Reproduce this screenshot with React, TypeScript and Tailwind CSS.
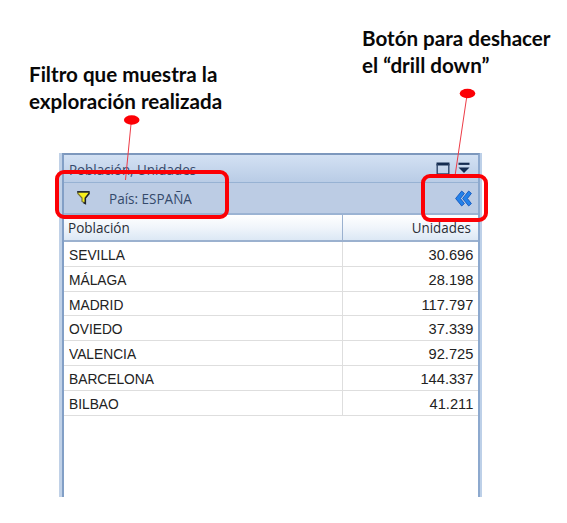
const rows = [
  ['SEVILLA', '30.696'],
  ['MÁLAGA', '28.198'],
  ['MADRID', '117.797'],
  ['OVIEDO', '37.339'],
  ['VALENCIA', '92.725'],
  ['BARCELONA', '144.337'],
  ['BILBAO', '41.211'],
];

function FilterIcon() {
  return (
    <svg width="16" height="16" viewBox="0 0 16 16" className="shrink-0">
      <path d="M1.8 2h11.2v1.5L9.2 8v5.3l-3.2-1.8V8L1.8 3.5z" fill="#f7ef1c" stroke="#77733a" strokeWidth="1.2" />
      <path d="M1.2 1.8h12.4" stroke="#252b35" strokeWidth="1.6" />
      <path d="M13 2.5v1.2L9.4 8v5.6L7.5 12.6" fill="none" stroke="#20222a" strokeWidth="1.4" />
    </svg>
  );
}

function WindowIcons() {
  return (
    <svg width="34" height="14" viewBox="0 0 34 14">
      <path d="M.5 2h13" stroke="#152c50" strokeWidth="3" />
      <path d="M1.2 2v10h11.6V2" fill="none" stroke="#30476b" strokeWidth="1.4" />
      <path d="M22.5 1.8h11" stroke="#152c50" strokeWidth="2.2" />
      <path d="M22.5 5.5h11L28 11z" fill="#152c50" />
    </svg>
  );
}

function BackIcon() {
  return (
    <svg width="17" height="17" viewBox="0 0 17 17">
      <g fill="#2381ea" stroke="#1558bd" strokeWidth=".9" strokeLinejoin="round">
        <path d="M6.7 1 9.4 3.4 5.4 8.5l4 5.1L6.7 16 .6 8.5z" />
        <path d="M13.7 1l2.7 2.4-4 5.1 4 5.1-2.7 2.4-6.1-7.5z" />
      </g>
    </svg>
  );
}

function Callout({ lines, className }: { lines: string[]; className: string }) {
  return (
    <div className={`absolute origin-top-left scale-x-[1.005] whitespace-nowrap font-['Lato',sans-serif] text-[20.5px] leading-[26.5px] font-bold text-[#080808] ${className}`}>
      {lines.map((line) => <div key={line}>{line}</div>)}
    </div>
  );
}

export default function App() {
  return (
    <div className="relative h-[523px] w-[567px] overflow-hidden bg-white pt-[153px] pl-[59px] font-['Open_Sans',sans-serif]">
      <div className="flex h-[344px] w-[423px] border-r-2 border-l-3 border-r-[#bdd0e8] border-l-[#c0d1e7]">
        <div className="w-full border-t-2 border-r-2 border-l-2 border-t-[#7d98bd] border-r-[#8da9ce] border-l-[#829fc6]">
          <div className="flex h-[28px] items-center justify-between border-b border-[#97b2d3] bg-gradient-to-b from-[#d3e1f3] to-[#b9cce6] pr-[8px] pl-[5px]">
            <span className="origin-left scale-x-[.955] pt-px text-[14px] text-[#34496b]">Población, Unidades</span>
            <WindowIcons />
          </div>
          <div className="flex h-[32px] items-center justify-between border-b-2 border-[#9bb3d3] bg-[#bccce4] pr-[6px] pl-[12px]">
            <div className="flex items-center gap-[17px]">
              <FilterIcon />
              <span className="origin-left scale-x-[.965] pt-px text-[14px] text-[#34496b]">País: ESPAÑA</span>
            </div>
            <BackIcon />
          </div>
          <div className="flex h-[27px] border-b-2 border-[#9bb1cf] bg-gradient-to-b from-white via-[#f0f5fb] to-[#dce8f5] text-[14px] text-[#292d35]">
            <div className="w-[279px] border-r border-[#9bb1cf] pl-[4px]"><span className="inline-block origin-left scale-x-[.965] leading-[25px]">Población</span></div>
            <div className="flex-1 pr-[7px] text-right"><span className="inline-block origin-right scale-x-[.955] leading-[25px]">Unidades</span></div>
          </div>
          {rows.map(([city, value]) => (
            <div key={city} className="flex h-[24.8px] border-b border-[#dedede] font-['Liberation_Sans',sans-serif] text-[14.5px] leading-[27px] text-[#222]">
              <div className="w-[279px] border-r border-[#dedede] pl-[5px]"><span className="inline-block origin-left scale-x-[.95]">{city}</span></div>
              <div className="flex-1 pr-[5px] text-right"><span className="inline-block origin-right scale-x-[1.01]">{value}</span></div>
            </div>
          ))}
        </div>
      </div>
      <Callout lines={['Filtro que muestra la', 'exploración realizada']} className="top-[61px] left-[29px]" />
      <Callout lines={['Botón para deshacer', 'el “drill down”']} className="top-[25px] left-[362px]" />
      <svg className="absolute inset-0" width="567" height="523" viewBox="0 0 567 523" fill="none">
        <g stroke="#ed3b46">
          <path d="M131.3 121 125.5 180" />
          <path d="M467 95 455.3 174" />
        </g>
        <g fill="#fc0005">
          <ellipse cx="131.7" cy="120" rx="7.8" ry="4.7" />
          <ellipse cx="467.5" cy="93.5" rx="7.8" ry="4.7" />
        </g>
        <g stroke="#fc0005" strokeWidth="4">
          <rect x="57" y="172" width="170" height="45" rx="7" />
          <rect x="423" y="176" width="63" height="44" rx="7" />
        </g>
      </svg>
    </div>
  );
}
